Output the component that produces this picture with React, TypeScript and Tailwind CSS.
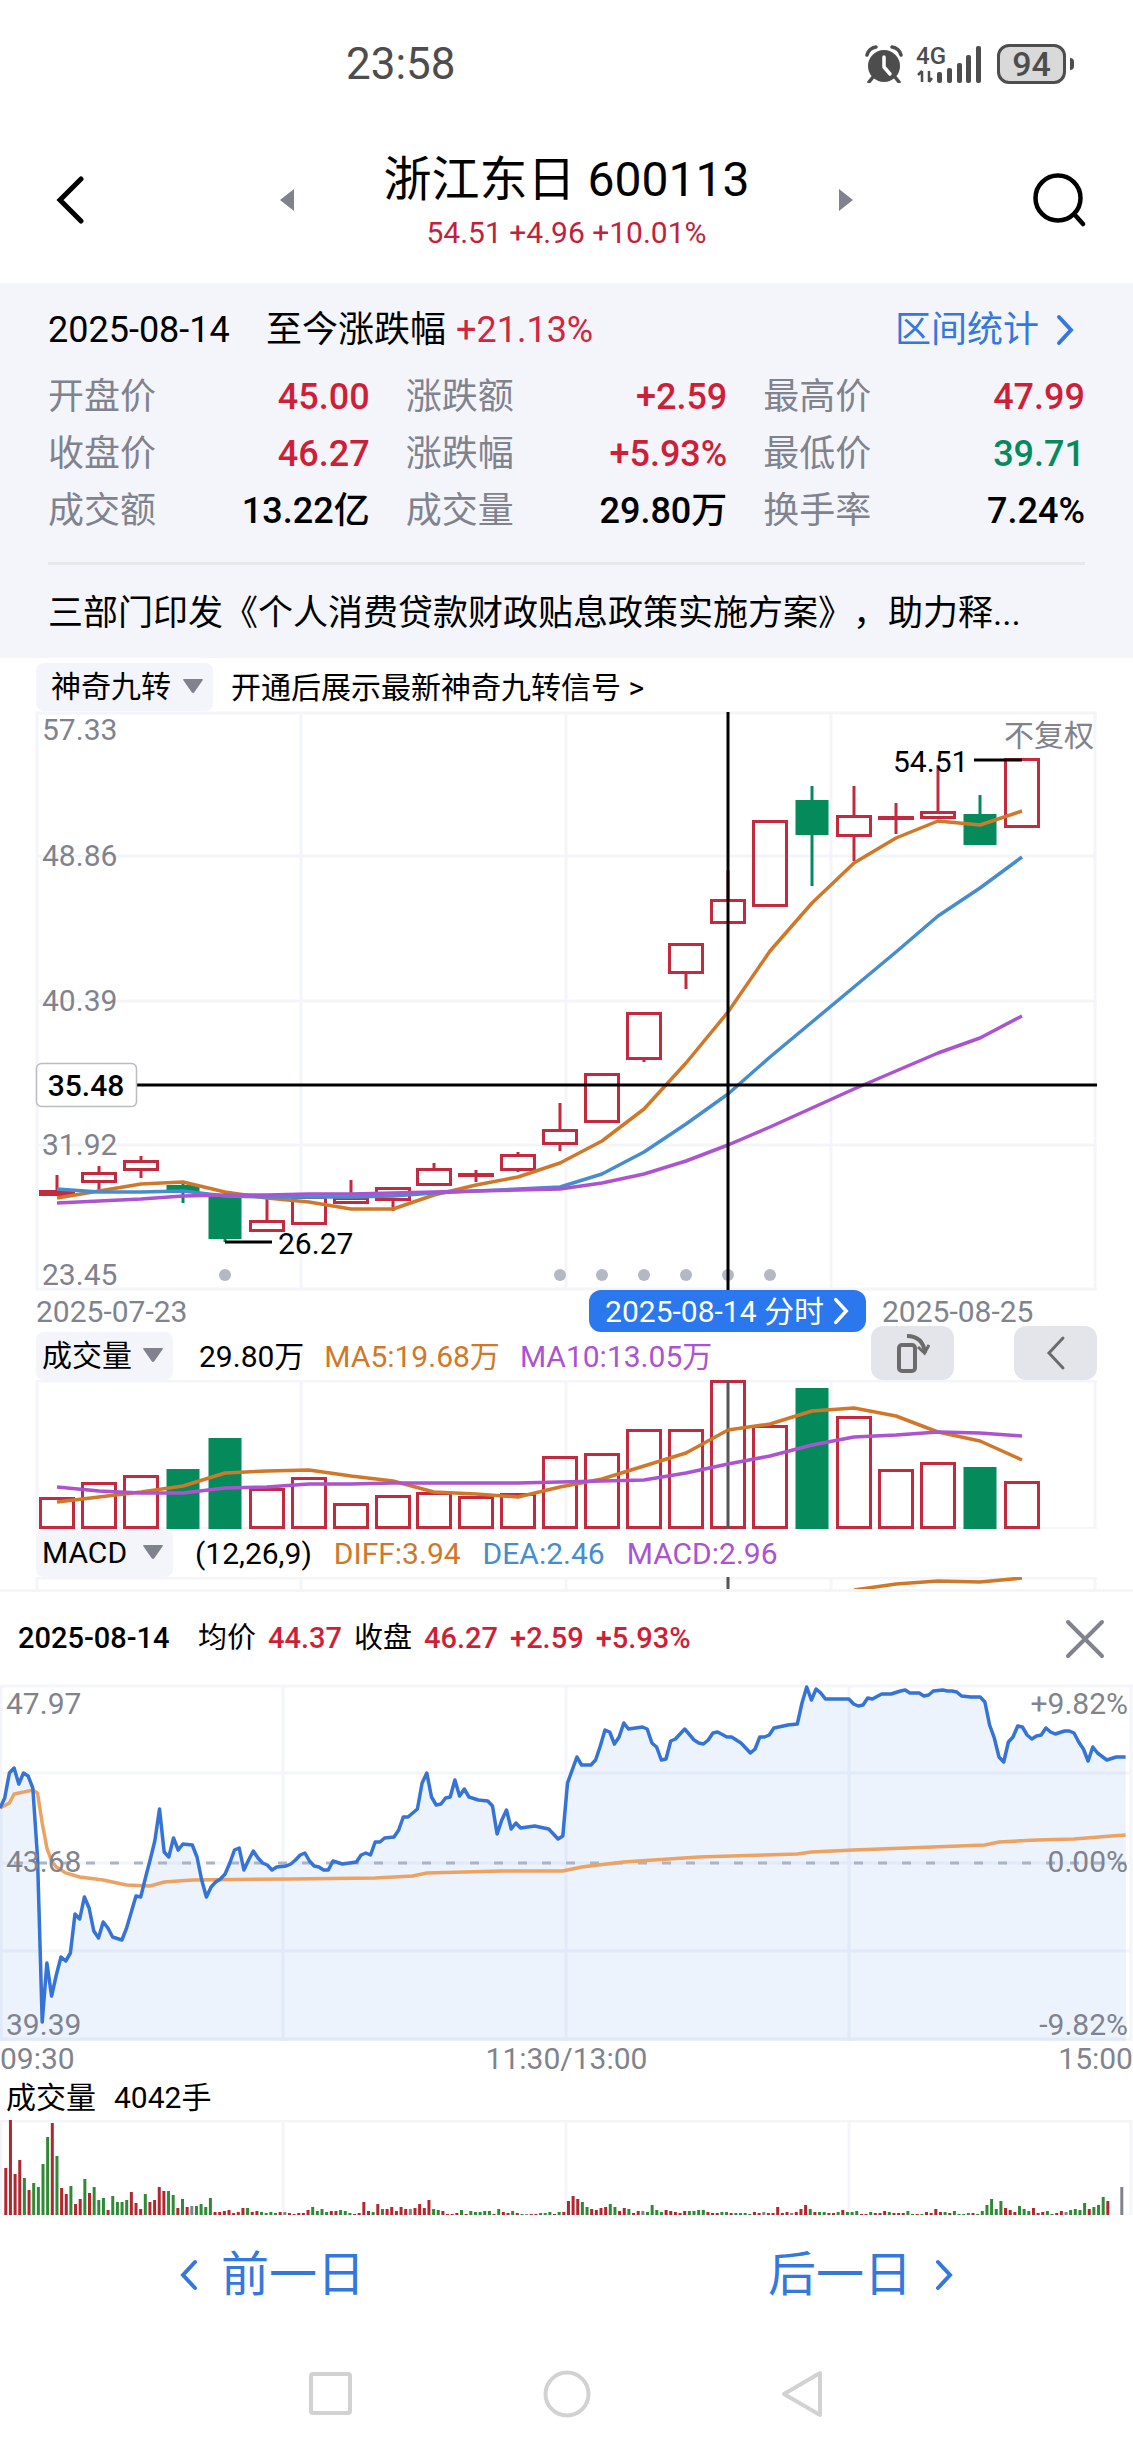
import type { ReactNode } from 'react'

const RED = '#c42a3f'
const GREEN = '#058a5c'
const ORANGE = '#d0782a'
const BLUE = '#468dd0'
const PURPLE = '#ab53d0'
const GRID = '#f4f5fa'
const GRAY = '#80838e'

const STATS = [
  { label: '开盘价', value: '45.00', color: 'text-[#cf1f38]' },
  { label: '涨跌额', value: '+2.59', color: 'text-[#cf1f38]' },
  { label: '最高价', value: '47.99', color: 'text-[#cf1f38]' },
  { label: '收盘价', value: '46.27', color: 'text-[#cf1f38]' },
  { label: '涨跌幅', value: '+5.93%', color: 'text-[#cf1f38]' },
  { label: '最低价', value: '39.71', color: 'text-[#058a5c]' },
  { label: '成交额', value: '13.22亿', color: 'text-black' },
  { label: '成交量', value: '29.80万', color: 'text-black' },
  { label: '换手率', value: '7.24%', color: 'text-black' },
]

// high, body top, body bottom, low, direction
type Candle = [number, number, number, number, 'up' | 'down']

const CANDLES: Candle[] = [
  [463, 478, 484, 484, 'up'], [454, 460, 471, 478, 'up'], [444, 448, 459, 466, 'up'],
  [471, 473, 480, 491, 'down'], [480, 485, 527, 530, 'down'], [487, 508, 520, 520, 'up'],
  [484, 484, 513, 513, 'up'], [468, 485, 492, 492, 'up'], [475, 475, 489, 499, 'up'],
  [451, 456, 474, 474, 'up'], [458, 461, 464, 470, 'up'], [440, 442, 459, 460, 'up'],
  [391, 417, 433, 439, 'up'], [361, 361, 411, 411, 'up'], [300, 300, 348, 350, 'up'],
  [231, 231, 262, 277, 'up'], [159, 187, 212, 212, 'up'], [108, 108, 195, 195, 'up'],
  [74, 88, 123, 174, 'down'], [74, 103, 125, 149, 'up'], [91, 104, 107, 122, 'up'],
  [53, 99, 107, 107, 'up'], [83, 102, 133, 133, 'down'], [46, 46, 116, 116, 'up'],
]

const MA5 = [486, 479, 472, 470, 480, 486, 490, 497, 497, 483, 473, 465, 451, 429, 397, 351, 300, 239, 191, 151, 126, 109, 113, 99]
const MA10 = [477, 480, 480, 479, 484, 485, 485, 485, 484, 481, 479, 477, 475, 462, 440, 412, 382, 345, 310, 275, 240, 204, 176, 145]
const MA20 = [491, 489, 487, 484, 483, 483, 482, 482, 481, 480, 479, 478, 477, 471, 462, 449, 433, 415, 396, 377, 359, 341, 326, 304]

const VOLUMES = [117, 102, 95, 89, 58, 108, 97, 123, 115, 112, 116, 113, 76, 73, 49, 49, 0, 45, 8, 36, 89, 82, 87, 101]
const VOL_MA5 = [122, 117, 112, 106, 93, 91, 90, 96, 101, 112, 114, 117, 107, 99, 86, 73, 50, 44, 31, 28, 36, 52, 61, 80]
const VOL_MA10 = [107, 111, 113, 113, 108, 107, 104, 104, 103, 103, 103, 103, 102, 101, 100, 93, 84, 76, 65, 57, 55, 52, 53, 56]

// minute index, y
const PRICE: [number, number][] = [
  [0, 123], [1, 113], [2, 88], [3, 83], [4, 99], [5, 88], [6, 91], [7, 103], [8, 172], [9, 337], [10, 278], [11, 311],
  [12, 290], [13, 272], [14, 276], [15, 268], [16, 229], [17, 234], [18, 212], [19, 223], [20, 246], [21, 253], [22, 237],
  [23, 243], [24, 252], [26, 255], [27, 243], [28, 227], [29, 211], [30, 212], [31, 193], [32, 175], [33, 156], [34, 124],
  [35, 167], [36, 172], [37, 153], [38, 165], [39, 159], [41, 160], [42, 172], [43, 195], [44, 212], [45, 202], [46, 197],
  [47, 194], [48, 189], [49, 178], [50, 165], [51, 163], [52, 185], [53, 175], [54, 166], [55, 173], [56, 178], [57, 180],
  [58, 185], [59, 182], [61, 181], [62, 179], [63, 175], [64, 170], [65, 168], [66, 176], [67, 181], [68, 182], [69, 185],
  [70, 185], [71, 176], [73, 179], [76, 177], [77, 170], [78, 168], [79, 170], [80, 157], [81, 157], [82, 153], [84, 152],
  [85, 145], [86, 132], [87, 132], [89, 124], [90, 98], [91, 88], [92, 112], [93, 120], [94, 119], [95, 113], [96, 112],
  [97, 95], [98, 111], [99, 104], [100, 112], [102, 115], [104, 116], [105, 121], [106, 149], [107, 135], [108, 125],
  [109, 144], [110, 138], [111, 143], [114, 141], [116, 143], [117, 144], [119, 154], [120, 151], [121, 98], [123, 72],
  [124, 80], [125, 80], [126, 80], [127, 75], [128, 61], [129, 45], [130, 47], [131, 59], [132, 52], [133, 38], [134, 44],
  [137, 42], [138, 44], [139, 58], [140, 62], [141, 75], [142, 74], [143, 56], [144, 54], [146, 44], [148, 55], [149, 58],
  [150, 59], [151, 55], [152, 48], [153, 47], [155, 52], [156, 52], [157, 55], [158, 58], [159, 63], [160, 68], [161, 64],
  [162, 52], [163, 52], [164, 50], [165, 43], [168, 40], [170, 39], [171, 18], [172, 2], [173, 15], [174, 4], [175, 8],
  [176, 14], [181, 14], [182, 19], [183, 21], [184, 20], [185, 13], [186, 14], [188, 9], [190, 9], [192, 6], [193, 5],
  [194, 8], [196, 8], [197, 11], [198, 10], [199, 6], [201, 5], [202, 6], [203, 6], [204, 7], [205, 11], [207, 12],
  [209, 12], [210, 17], [211, 40], [212, 53], [213, 72], [214, 77], [215, 57], [216, 52], [217, 41], [218, 42], [219, 50],
  [220, 54], [221, 51], [222, 50], [223, 43], [224, 47], [225, 49], [227, 46], [228, 46], [229, 48], [230, 57], [231, 64],
  [232, 76], [233, 62], [234, 68], [236, 75], [238, 72], [240, 72],
]

const AVERAGE: [number, number][] = [
  [0, 123], [2, 118], [3, 109], [7, 105], [8, 108], [9, 138], [10, 163], [11, 176], [12, 182], [14, 188], [17, 192],
  [22, 195], [27, 200], [32, 201], [35, 197], [41, 195], [62, 194], [80, 193], [88, 191], [91, 188], [107, 186],
  [120, 186], [121, 185], [124, 182], [133, 177], [149, 172], [163, 170], [170, 169], [173, 167], [182, 165], [210, 160],
  [213, 157], [221, 155], [229, 154], [237, 151], [240, 150],
]

// r = up, g = down, x = flat, followed by the bar height
const MINUTE_VOLUME = `
r47 r95 r41 r55 g37 r25 g32 g28 g51 g78 r92 g59 r27 r21 g29 r11 r16 g36 r22 g28
g15 g17 r5 g19 g13 g13 g15 r23 r12 r6 g21 r13 r15 r28 r24 g24 g20 r7 g16 r8
x9 g9 g11 g8 g17 r3 r3 r4 r5 r2 r3 r7 g7 r3 r4 g3 g2 g3 g2 r3
x3 r2 r1 r2 r2 r5 g8 g4 g6 g3 r4 r4 g5 g4 g2 r1 r2 r13 r4 g3
r11 g6 r6 r8 r4 r8 r6 x6 r7 r11 r7 r15 g6 g5 r4 r1 r1 r2 g5 r1
g4 g3 g3 g4 g4 r1 g6 r3 r2 g4 r2 g1 x1 r1 r1 g2 g2 g3 r1 g3 r3
r14 r19 r16 g13 g8 r6 r5 r7 r8 g11 g8 r4 r7 g6 r2 r4 x4 g3 g10 g5
g3 r5 r4 r3 r2 r4 g4 g4 g5 g5 r3 r2 r2 g3 g3 r2 g2 g2 g2 g1
r3 r2 x3 r2 r2 r8 r2 r3 x2 r3 r6 r10 g6 r3 g3 g3 r2 r2 g3
r5 g3 g3 g4 r1 r1 g3 r2 r2 r4 g3 r2 r2 r2 g4 g1 r1 g1 r3 r2
r6 r3 g3 r2 g4 g1 g1 g2 r2 g1 g4 g10 g16 g6 g14 r7 r5 r3 g9 g6
g4 r7 r2 r3 g4 g1 r2 r4 x3 g5 g6 g5 g12 r6 g8 g10 g18 r14 x0 x0 x28
`.trim().split(/\s+/)

const candleX = (i: number) => Math.round(57 + i * 41.94)
const dayLine = (ys: number[]) => ys.map((y, i) => `${candleX(i)},${y}`).join(' ')
const minuteLine = (pts: [number, number][]) => pts.map(([i, y]) => `${(i * 4.69).toFixed(1)},${y}`).join(' ')

function Picker({ label, value, className }: { label: string; value: string; className: string }) {
  return (
    <div className="relative h-12 shrink-0">
      <select
        aria-label={label}
        className={`h-12 appearance-none rounded-lg bg-[#f4f5fa] leading-[48px] text-black outline-none ${className}`}
        defaultValue={value}
      >
        <option>{value}</option>
      </select>
      <svg viewBox="0 0 20 14" className="pointer-events-none absolute right-2.5 top-4 h-3.5 w-5" fill={GRAY}>
        <path d="M1 0H19Q20.500 0 19.500 1.500L11.500 13Q10 15 8.500 13L.5 1.500Q-.5 0 1 0Z" />
      </svg>
    </div>
  )
}

function Chevron({ dir, className }: { dir: 'left' | 'right'; className: string }) {
  return (
    <svg viewBox="0 0 20 32" className={className} fill="none" stroke="currentColor" strokeWidth="4" strokeLinecap="round">
      <path d={dir === 'left' ? 'M16 3L4 16L16 29' : 'M4 3L16 16L4 29'} />
    </svg>
  )
}

function DayGrid({ height }: { height: number }) {
  return (
    <g stroke={GRID} strokeWidth="3">
      {[37, 301, 566, 831, 1095].map((x) => (
        <line key={x} x1={x} x2={x} y1="0" y2={height} />
      ))}
      <line x1="36" x2="1097" y1="1" y2="1" />
    </g>
  )
}

function StatusBar() {
  return (
    <div className="flex h-[116px] items-center pl-[346px] pr-[59px] pt-3 text-[#4d4d4d]">
      <span className="text-[44px] leading-none">23:58</span>
      <div className="ml-auto flex items-center">
        <svg viewBox="0 0 38 38" className="h-[38px] w-[38px]" fill="currentColor">
          <circle cx="19" cy="21" r="16" />
          <path d="M2 10Q4 3 11 2M36 10Q34 3 27 2M8 32L4 37M30 32L34 37" fill="none" stroke="currentColor" strokeWidth="3.500" strokeLinecap="round" />
          <path d="M19 12V22L25 29" fill="none" stroke="#fff" strokeWidth="3.500" strokeLinecap="round" strokeLinejoin="round" />
        </svg>
        <svg viewBox="0 0 66 38" className="ml-3.5 h-[38px] w-[66px] overflow-visible" fill="currentColor">
          <text x="-1" y="19" fontSize="24" fontWeight="500">4G</text>
          <path d="M5 26V37M5 26L1 30M12 37V26M12 37L15 33" fill="none" stroke="currentColor" strokeWidth="2.500" />
          <rect x="20" y="27" width="5" height="11" rx="2" />
          <rect x="30" y="23" width="5" height="15" rx="2" />
          <rect x="40" y="18" width="5" height="20" rx="2" />
          <rect x="49" y="10" width="5" height="28" rx="2" />
          <rect x="59" y="1" width="5" height="37" rx="2" />
        </svg>
        <div className="ml-3.5 flex h-10 w-[69px] items-center justify-center rounded-xl border-[3px] border-[#4d4d4d] bg-[#d9d9d9] text-[34px] font-medium leading-none">
          94
        </div>
        <div className="ml-1 h-3 w-1 rounded-r bg-[#4d4d4d]" />
      </div>
    </div>
  )
}

function Header() {
  return (
    <header className="flex h-[167px] items-center justify-between px-[46px]">
      <button aria-label="返回" className="flex h-14 w-14 items-center pl-2.5">
        <svg viewBox="0 0 28 48" className="h-12 w-7" fill="none" stroke="#000" strokeWidth="5" strokeLinecap="round">
          <path d="M25 3L4 24L25 45" />
        </svg>
      </button>
      <div className="flex items-center gap-[90px]">
        <button aria-label="上一只">
          <svg viewBox="0 0 14 22" className="h-[22px] w-3.5" fill={GRAY}><path d="M14 0V22L0 11Z" /></svg>
        </button>
        <div className="pt-3 text-center">
          <h1 className="text-[48px] font-normal leading-[54px] text-black">浙江东日 600113</h1>
          <p className="text-[30px] leading-[52px] text-[#c0223a]">54.51 +4.96 +10.01%</p>
        </div>
        <button aria-label="下一只">
          <svg viewBox="0 0 14 22" className="h-[22px] w-3.5" fill={GRAY}><path d="M0 0V22L14 11Z" /></svg>
        </button>
      </div>
      <button aria-label="搜索" className="flex h-14 w-14 items-center justify-end">
        <svg viewBox="0 0 54 54" className="h-[54px] w-[54px]" fill="none" stroke="#000" strokeWidth="4.500" strokeLinecap="round">
          <circle cx="25" cy="25" r="22.500" />
          <path d="M42 42L50 51" />
        </svg>
      </button>
    </header>
  )
}

function Summary() {
  return (
    <section className="h-[375px] bg-[#f4f5fa] px-12 pt-[21px] text-[36px]">
      <div className="flex h-[52px] items-center">
        <span className="w-[218px] text-black">2025-08-14</span>
        <span className="text-black">至今涨跌幅</span>
        <span className="ml-2.5 text-[#cf2740]">+21.13%</span>
        <a href="#stats" className="ml-auto flex items-center gap-4 pr-2.5 text-[#3478dd]">
          区间统计
          <Chevron dir="right" className="h-8 w-5" />
        </a>
      </div>
      <dl className="mt-3 grid grid-cols-3 gap-x-9">
        {STATS.map((s) => (
          <div key={s.label} className="flex h-[57px] items-center justify-between">
            <dt className="text-[#80838e]">{s.label}</dt>
            <dd className={`font-medium ${s.color}`}>{s.value}</dd>
          </div>
        ))}
      </dl>
      <div className="mt-[23px] border-t-[3px] border-[#e6e8ec]" />
      <p className="overflow-hidden whitespace-nowrap pt-[22px] text-[35px] leading-[54px] text-black [text-spacing-trim:space-all]">
        三部门印发《个人消费贷款财政贴息政策实施方案》，助力释...
      </p>
    </section>
  )
}

function CandleChart() {
  return (
    <svg viewBox="0 0 1133 578" className="block h-auto w-full overflow-visible" fontSize="30">
      <DayGrid height={578} />
      <g stroke={GRID} strokeWidth="3">
        {[144, 289, 433, 577].map((y) => (
          <line key={y} x1="36" x2="1097" y1={y} y2={y} />
        ))}
      </g>
      {CANDLES.map(([high, top, bottom, low, dir], i) => {
        const x = candleX(i)
        if (dir === 'down') {
          return (
            <g key={i} fill={GREEN}>
              <rect x={x - 1.5} y={high} width="3" height={low - high} />
              <rect x={x - 16.5} y={top} width="33" height={bottom - top} />
            </g>
          )
        }
        return (
          <g key={i} fill={RED}>
            <rect x={x - 1.5} y={high} width="3" height={top - high} />
            <rect x={x - 1.5} y={bottom} width="3" height={low - bottom} />
            <rect x={x - 16.5} y={top + 1.5} width="33" height={Math.max(bottom - top - 3, 1)} fill="none" stroke={RED} strokeWidth="3" />
          </g>
        )
      })}
      <g fill="none" strokeWidth="3.500" strokeLinejoin="round">
        <polyline points={dayLine(MA5)} stroke={ORANGE} />
        <polyline points={dayLine(MA10)} stroke={BLUE} />
        <polyline points={dayLine(MA20)} stroke={PURPLE} />
      </g>
      <g fill="#b3b8c4">
        {[4, 12, 13, 14, 15, 16, 17].map((i) => (
          <circle key={i} cx={candleX(i)} cy="563" r="6" />
        ))}
      </g>
      <g fill={GRAY}>
        <text x="42" y="28">57.33</text>
        <text x="42" y="154">48.86</text>
        <text x="42" y="299">40.39</text>
        <text x="42" y="443">31.92</text>
        <text x="42" y="573">23.45</text>
        <text x="1094" y="34" textAnchor="end">不复权</text>
      </g>
      <path d="M974 48H1022M225 530H272" stroke="#000" strokeWidth="3" />
      <text x="893" y="60">54.51</text>
      <text x="278" y="542">26.27</text>
      <path d="M728 0V578M137 373H1097" stroke="#000" strokeWidth="3" />
      <rect x="36.500" y="351.500" width="100" height="43" rx="5" fill="#fff" stroke="#b9bcc2" strokeWidth="1.500" />
      <text x="86" y="384" textAnchor="middle" fontWeight="500">35.48</text>
    </svg>
  )
}

function VolumeChart() {
  return (
    <svg viewBox="0 0 1133 149" className="block h-auto w-full">
      <DayGrid height={149} />
      <line x1="36" x2="1097" y1="148" y2="148" stroke={GRID} strokeWidth="2" />
      {VOLUMES.map((top, i) => {
        const x = candleX(i)
        return CANDLES[i][4] === 'down' ? (
          <rect key={i} x={x - 16.5} y={top} width="33" height={149 - top} fill={GREEN} />
        ) : (
          <rect key={i} x={x - 16.5} y={top + 1.5} width="33" height={146 - top} fill="none" stroke={RED} strokeWidth="3" />
        )
      })}
      <line x1="728" x2="728" y1="0" y2="149" stroke="#555" strokeWidth="3" />
      <g fill="none" strokeWidth="3.500" strokeLinejoin="round">
        <polyline points={dayLine(VOL_MA5)} stroke={ORANGE} />
        <polyline points={dayLine(VOL_MA10)} stroke={PURPLE} />
      </g>
    </svg>
  )
}

function FloatButton({ label, children }: { label: string; children: ReactNode }) {
  return (
    <button aria-label={label} className="flex h-[54px] w-[83px] items-center justify-center rounded-xl bg-[#e4e5ea] text-[#6b6b6b]">
      {children}
    </button>
  )
}

function DayPanel() {
  return (
    <section className="text-[30px]">
      <div className="flex h-[54px] items-center gap-[18px] px-9 pt-1">
        <Picker label="指标" value="神奇九转" className="w-[177px] pl-[15px]" />
        <a href="#signal" className="whitespace-nowrap text-black">开通后展示最新神奇九转信号 &gt;</a>
      </div>

      <CandleChart />

      <div className="flex h-[42px] items-center pl-9 text-[#80838e]">
        <span>2025-07-23</span>
        <button className="ml-auto flex h-[42px] w-[277px] items-center justify-center gap-2 whitespace-nowrap rounded-xl bg-[#2b77ee] text-white">
          2025-08-14 分时
          <Chevron dir="right" className="h-7 w-[18px]" />
        </button>
        <span className="w-[267px] pl-4">2025-08-25</span>
      </div>

      <div className="relative flex h-12 items-center gap-5 whitespace-nowrap px-9">
        <Picker label="副图指标一" value="成交量" className="w-[137px] pl-1.5" />
        <span className="pl-1.5 text-black">29.80万</span>
        <span className="text-[#d0782a]">MA5:19.68万</span>
        <span className="text-[#ab53d0]">MA10:13.05万</span>
        <div className="absolute bottom-0 right-9 flex gap-[60px]">
          <FloatButton label="横屏">
            <svg viewBox="0 0 34 40" className="h-10 w-[34px]" fill="none" stroke="currentColor" strokeWidth="4">
              <rect x="3" y="12" width="16" height="26" rx="3" />
              <path d="M11 3Q27 3 29 20" />
              <path d="M22 14L28.500 20L33 12" strokeWidth="3" />
            </svg>
          </FloatButton>
          <FloatButton label="收起">
            <svg viewBox="0 0 20 36" className="h-9 w-5" fill="none" stroke="currentColor" strokeWidth="3" strokeLinecap="round">
              <path d="M17 3L3 18L17 33" />
            </svg>
          </FloatButton>
        </div>
      </div>

      <VolumeChart />

      <div className="flex h-12 items-center gap-[22px] whitespace-nowrap px-9">
        <Picker label="副图指标二" value="MACD" className="w-[137px] pl-1.5" />
        <span className="text-black">(12,26,9)</span>
        <span className="text-[#d0782a]">DIFF:3.94</span>
        <span className="text-[#468dd0]">DEA:2.46</span>
        <span className="text-[#ab53d0]">MACD:2.96</span>
      </div>
      <svg viewBox="0 0 1133 12" className="block h-auto w-full">
        <DayGrid height={12} />
        <line x1="728" x2="728" y1="0" y2="12" stroke="#555" strokeWidth="3" />
        <polyline points="854,13 896,7 938,4 980,5 1022,1" fill="none" stroke={ORANGE} strokeWidth="3.500" />
      </svg>
    </section>
  )
}

function MinutePanel() {
  return (
    <section className="border-t-[3px] border-[#f4f5fa] text-[30px]">
      <div className="flex h-[93px] items-center gap-3 whitespace-nowrap pl-[18px] pr-7 text-[29px] font-medium text-[#cf1f38]">
        <span className="w-[168px] text-black">2025-08-14</span>
        <span className="font-normal text-black">均价</span>
        <span>44.37</span>
        <span className="font-normal text-black">收盘</span>
        <span>46.27</span>
        <span>+2.59</span>
        <span>+5.93%</span>
        <button aria-label="关闭" className="ml-auto">
          <svg viewBox="0 0 40 40" className="h-10 w-10" fill="none" stroke={GRAY} strokeWidth="4" strokeLinecap="round">
            <path d="M3 3L37 37M37 3L3 37" />
          </svg>
        </button>
      </div>

      <svg viewBox="0 0 1133 356" className="block h-auto w-full overflow-visible" fontSize="30">
        <g stroke={GRID} strokeWidth="3">
          {[1, 283, 566, 849, 1131].map((x) => (
            <line key={x} x1={x} x2={x} y1="0" y2="356" />
          ))}
          {[1, 88, 178, 266, 354].map((y) => (
            <line key={y} x1="0" x2="1133" y1={y} y2={y} />
          ))}
        </g>
        <polygon points={`0,356 ${minuteLine(PRICE)} 1126,356`} fill="#2b77ee" fillOpacity="0.09" />
        <line x1="14" x2="1126" y1="178" y2="178" stroke="#abb3c8" strokeWidth="3" strokeDasharray="9 15" />
        <polyline points={minuteLine(AVERAGE)} fill="none" stroke="#eba262" strokeWidth="3.500" />
        <polyline points={minuteLine(PRICE)} fill="none" stroke="#3573d6" strokeWidth="3.500" strokeLinejoin="round" />
        <g fill={GRAY}>
          <text x="6" y="29">47.97</text>
          <text x="6" y="187">43.68</text>
          <text x="6" y="350">39.39</text>
          <g textAnchor="end">
            <text x="1128" y="29">+9.82%</text>
            <text x="1128" y="187">0.00%</text>
            <text x="1128" y="350">-9.82%</text>
          </g>
        </g>
      </svg>

      <div className="flex h-[34px] items-center justify-between text-[#80838e]">
        <span>09:30</span>
        <span>11:30/13:00</span>
        <span>15:00</span>
      </div>
      <div className="flex h-[45px] items-center gap-[18px] pl-1.5 text-black">
        <span>成交量</span>
        <span>4042手</span>
      </div>

      <svg viewBox="0 0 1133 95" className="block h-auto w-full">
        <g stroke={GRID} strokeWidth="3">
          {[1, 283, 566, 849, 1131].map((x) => (
            <line key={x} x1={x} x2={x} y1="0" y2="95" />
          ))}
          <line x1="0" x2="1133" y1="1" y2="1" />
          <line x1="0" x2="1133" y1="94" y2="94" strokeWidth="1" />
        </g>
        {MINUTE_VOLUME.map((bar, i) => {
          const h = Number(bar.slice(1))
          const fill = bar[0] === 'r' ? '#b3262e' : bar[0] === 'g' ? '#2f8a35' : '#80838e'
          return <rect key={i} x={4.3 + i * 4.65} y={95 - h} width="3" height={h} fill={fill} />
        })}
      </svg>
    </section>
  )
}

export default function App() {
  return (
    <main className="min-h-screen bg-white font-[Roboto,'Noto_Sans_CJK_SC',sans-serif]">
      <StatusBar />
      <Header />
      <Summary />
      <DayPanel />
      <MinutePanel />

      <div className="flex h-[120px] items-center justify-between px-[179px] text-[48px] text-[#3478dd]">
        <button className="flex items-center gap-[22px]">
          <Chevron dir="left" className="h-8 w-5" />
          前一日
        </button>
        <button className="flex items-center gap-[22px]">
          后一日
          <Chevron dir="right" className="h-8 w-5" />
        </button>
      </div>

      <nav className="flex h-[118px] items-center justify-between px-[309px]">
        <button aria-label="最近任务">
          <svg viewBox="0 0 44 48" className="h-12 w-11" fill="none" stroke="#d2d2d2" strokeWidth="4">
            <rect x="2" y="4" width="39" height="39" rx="2" />
          </svg>
        </button>
        <button aria-label="主页">
          <svg viewBox="0 0 48 48" className="h-12 w-12" fill="none" stroke="#d2d2d2" strokeWidth="4">
            <circle cx="24" cy="24" r="21.500" />
          </svg>
        </button>
        <button aria-label="返回上级">
          <svg viewBox="0 0 44 48" className="h-12 w-11" fill="none" stroke="#d2d2d2" strokeWidth="4" strokeLinejoin="round">
            <path d="M40 3V45L4 24Z" />
          </svg>
        </button>
      </nav>
    </main>
  )
}
